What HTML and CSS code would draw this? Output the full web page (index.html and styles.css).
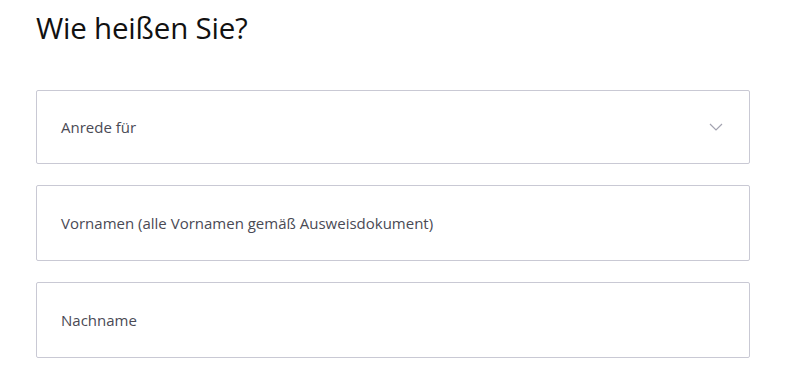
FILE: index.html
```html
<!DOCTYPE html>
<html lang="de">
<head>
<meta charset="utf-8">
<link rel="stylesheet" href="styles.css">
</head>
<body>
<main class="page">
  <h1 class="title">Wie heißen Sie?</h1>
  <form class="form">
    <div class="field field-select">
      <span class="label">Anrede für</span>
      <svg class="chevron" width="14" height="8" viewBox="0 0 14 8"><path d="M1 1 L7 7 L13 1" fill="none" stroke="#a3a3b0" stroke-width="1.2"/></svg>
    </div>
    <div class="field">
      <span class="label">Vornamen (alle Vornamen gemäß Ausweisdokument)</span>
    </div>
    <div class="field">
      <span class="label">Nachname</span>
    </div>
  </form>
</main>
</body>
</html>
```
FILE: styles.css
```css
html, body { margin: 0; padding: 0; background: #fff; }
.page {
  padding: 8px 50px 0 36px;
  font-family: "Open Sans", sans-serif;
}
.title {
  margin: 0;
  font-family: "Open Sans", sans-serif;
  font-weight: 400;
  font-size: 29.5px;
  line-height: 40px;
  color: #111;
  letter-spacing: -0.2px;
}
.form {
  margin-top: 42px;
  display: flex;
  flex-direction: column;
  gap: 21px;
  width: 714px;
}
.field {
  box-sizing: border-box;
  height: 76px;
  border: 1px solid #c9c9d4;
  border-radius: 2px;
  display: flex;
  align-items: center;
  justify-content: space-between;
  padding: 0 26px 0 24px;
}
.field-select { height: 74px; }
.label {
  font-size: 15px;
  color: #4a4a55;
}
.chevron { display: block; }
```
